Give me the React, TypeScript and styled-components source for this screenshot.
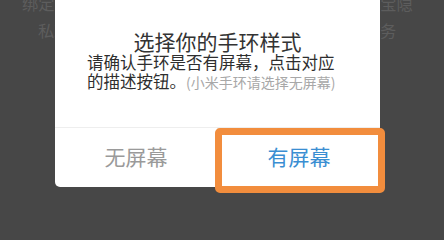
import React from "react";
import styled, { createGlobalStyle } from "styled-components";

const Global = createGlobalStyle`
  html, body { margin: 0; padding: 0; }
  body {
    width: 444px;
    height: 239px;
    overflow: hidden;
    background: #474747;
    font-family: "Noto Sans CJK SC", "Noto Sans", sans-serif;
  }
`;

const Screen = styled.div`
  position: relative;
  width: 444px;
  height: 239px;
  overflow: hidden;
  background: #474747;
`;

const BackText = styled.div`
  display: flex;
  flex-direction: column;
  margin-top: -10px;
`;

const BackLine = styled.div<{ $indent: number }>`
  padding-left: ${(p) => p.$indent}px;
  font-size: 16.3px;
  line-height: 27px;
  color: #5d5d5d;
  white-space: nowrap;
`;

const Dialog = styled.div`
  position: absolute;
  left: 55px;
  top: -8px;
  width: 325px;
  height: 195px;
  background: #ffffff;
  border-radius: 5px;
  display: flex;
  flex-direction: column;
`;

const Title = styled.div`
  padding-top: 37.5px;
  text-align: center;
  font-size: 21px;
  line-height: 22px;
  color: #333333;
`;

const Body = styled.div`
  margin-top: 1px;
  padding: 0 32px;
  font-size: 16.5px;
  line-height: 19px;
  color: #2e2e2e;
  flex: 1;
`;

const Note = styled.span`
  font-size: 14px;
  color: #a8a8a8;
`;

const Footer = styled.div`
  display: flex;
  height: 59px;
  border-top: 1px solid #eeeeee;
`;

const Btn = styled.div<{ $primary?: boolean }>`
  position: relative;
  flex: 1;
  display: flex;
  align-items: center;
  justify-content: center;
  padding-bottom: 4px;
  font-size: 21px;
  color: ${(p) => (p.$primary ? "#3a8ed2" : "#9a9a9a")};
  & + & {
    border-left: 1px solid #eeeeee;
  }
`;

const Highlight = styled.div`
  position: absolute;
  left: -3px;
  top: 0px;
  right: -5px;
  bottom: -6px;
  border: 7px solid #f28d3d;
  border-radius: 5px;
  pointer-events: none;
`;

export default function App() {
  return (
    <>
      <Global />
      <Screen>
        <BackText>
          <BackLine $indent={22}>绑定手环即表示您已阅读并同意米动用户协议以及宝隐</BackLine>
          <BackLine $indent={38}>私政策，我们将严格保护您的个人信息安全与服务</BackLine>
        </BackText>
        <Dialog>
          <Title>选择你的手环样式</Title>
          <Body>
            请确认手环是否有屏幕，点击对应的描述按钮。<Note>(小米手环请选择无屏幕)</Note>
          </Body>
          <Footer>
            <Btn>无屏幕</Btn>
            <Btn $primary>
              有屏幕
              <Highlight />
            </Btn>
          </Footer>
        </Dialog>
      </Screen>
    </>
  );
}
